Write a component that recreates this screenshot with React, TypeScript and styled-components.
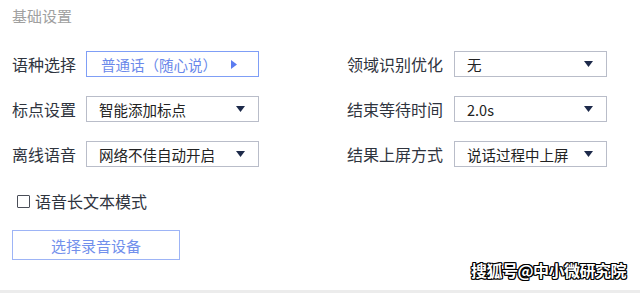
import React from "react";
import styled, { createGlobalStyle } from "styled-components";

const Global = createGlobalStyle`
  html, body { margin: 0; padding: 0; background: #fff; }
  body { font-family: "Noto Sans CJK SC", "Noto Sans", sans-serif; }
`;

const Page = styled.div`
  position: relative;
  width: 640px;
  height: 293px;
  box-sizing: border-box;
  padding: 6px 0 0 12px;
  border-bottom: 3px solid #ececec;
  overflow: hidden;
`;

const Title = styled.div`
  font-size: 15px;
  line-height: 20px;
  color: #a0a0a0;
`;

const Grid = styled.div`
  margin-top: 25px;
  display: grid;
  grid-template-columns: 74px 173px 88px 107px 153px;
  grid-auto-rows: 26px;
  row-gap: 19px;
  align-items: center;
`;

const Label = styled.div<{ $col: number }>`
  grid-column: ${(p) => p.$col};
  font-size: 16px;
  color: #2f343e;
  white-space: nowrap;
  line-height: 26px;
`;

const Select = styled.div<{ $col: number; $active?: boolean }>`
  grid-column: ${(p) => p.$col};
  height: 26px;
  box-sizing: border-box;
  border: 1px solid ${(p) => (p.$active ? "#7f9ef6" : "#b9bdc9")};
  display: flex;
  align-items: center;
  justify-content: space-between;
  padding: 0 ${(p) => (p.$active ? "21px" : "13px")} 0 ${(p) => (p.$active ? "14px" : "12px")};
  font-size: 14.5px;
  color: ${(p) => (p.$active ? "#6a88ea" : "#222")};
  white-space: nowrap;
`;

const Check = styled.label`
  margin-top: 26px;
  margin-left: 5px;
  display: flex;
  align-items: center;
  gap: 5px;
  font-size: 16px;
  color: #2f343e;
  height: 16px;
`;

const Box = styled.span`
  width: 11px;
  height: 11px;
  border: 1.5px solid #4a4e58;
  border-radius: 1px;
  display: inline-block;
`;

const Button = styled.div`
  margin-top: 21px;
  width: 168px;
  height: 30px;
  box-sizing: border-box;
  border: 1px solid #9db4f6;
  color: #7290ec;
  font-size: 15px;
  display: flex;
  align-items: center;
  justify-content: center;
`;

const Watermark = styled.div`
  position: absolute;
  right: 14px;
  bottom: 8px;
  font-size: 16px;
  font-weight: 700;
  color: #fff;
  letter-spacing: -0.5px;
  text-shadow: 1px 0 0 #000, -1px 0 0 #000, 0 1px 0 #000, 0 -1px 0 #000,
    1px 1px 0 #000, -1px -1px 0 #000, 1px -1px 0 #000, -1px 1px 0 #000;
`;

const Down = () => (
  <svg width="9" height="6" viewBox="0 0 9 6">
    <polygon points="0,0 9,0 4.5,6" fill="#1d2a4a" />
  </svg>
);

const Play = () => (
  <svg width="6" height="9" viewBox="0 0 6 9">
    <polygon points="0,0 6,4.5 0,9" fill="#5b7cf0" />
  </svg>
);

const rows = [
  { l: "语种选择", v: "普通话（随心说）", active: true, rl: "领域识别优化", rv: "无" },
  { l: "标点设置", v: "智能添加标点", rl: "结束等待时间", rv: "2.0s" },
  { l: "离线语音", v: "网络不佳自动开启", rl: "结果上屏方式", rv: "说话过程中上屏" },
];

export default function App() {
  return (
    <>
      <Global />
      <Page>
        <Title>基础设置</Title>
        <Grid>
          {rows.map((r) => (
            <React.Fragment key={r.l}>
              <Label $col={1}>{r.l}</Label>
              <Select $col={2} $active={r.active}>
                <span>{r.v}</span>
                {r.active ? <Play /> : <Down />}
              </Select>
              <Label $col={4}>{r.rl}</Label>
              <Select $col={5}>
                <span>{r.rv}</span>
                <Down />
              </Select>
            </React.Fragment>
          ))}
        </Grid>
        <Check>
          <Box />
          语音长文本模式
        </Check>
        <Button>选择录音设备</Button>
        <Watermark>搜狐号@中小微研究院</Watermark>
      </Page>
    </>
  );
}
